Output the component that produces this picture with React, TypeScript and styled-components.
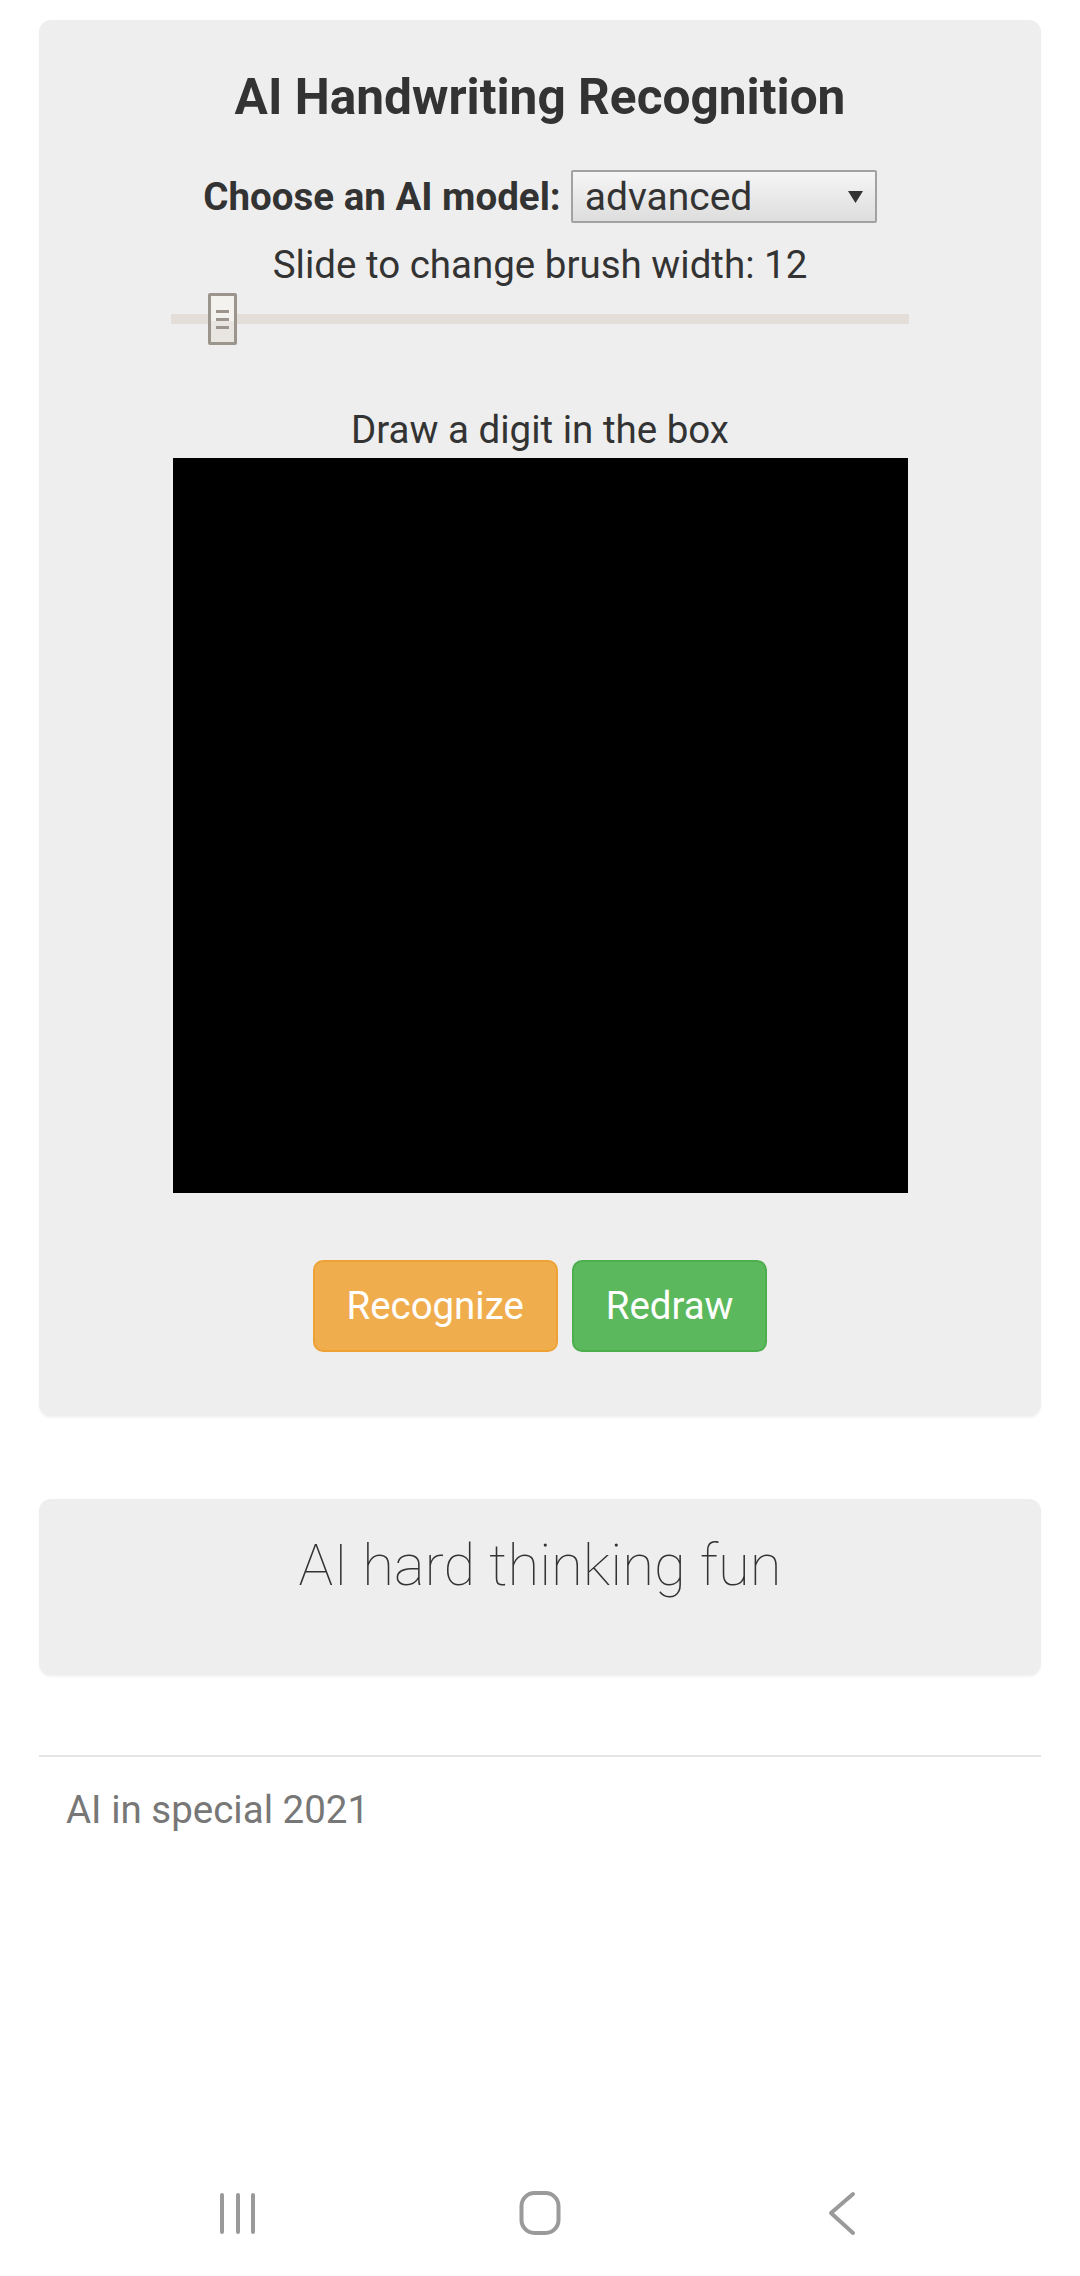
import React, { useState } from "react";
import styled, { createGlobalStyle } from "styled-components";

const GlobalStyle = createGlobalStyle`
  html, body {
    margin: 0;
    padding: 0;
    background: #fff;
    font-family: Roboto, "Liberation Sans", Arial, sans-serif;
    color: #333;
  }
  * {
    box-sizing: border-box;
  }
`;

const Page = styled.div`
  display: flex;
  flex-direction: column;
  min-height: 2276px;
`;

const Main = styled.main`
  padding: 20px 39px 0;
`;

const Panel = styled.section`
  display: flex;
  flex-direction: column;
  align-items: center;
  background: #eee;
  border-radius: 12px;
  box-shadow: 0 2px 2px rgba(0, 0, 0, 0.05);
  padding: ${(p: { pad: string }) => p.pad};
`;

const Title = styled.h1`
  margin: 0;
  padding-top: 1px;
  font-size: 49.6px;
  line-height: 59px;
  font-weight: 700;
  color: #333;
`;

const ModelRow = styled.div`
  margin-top: 43px;
  height: 53px;
  display: flex;
  align-items: center;
  gap: 10px;
`;

const Label = styled.label`
  font-size: 38.5px;
  line-height: 44px;
  font-weight: 700;
  color: #333;
`;

const SelectBox = styled.div`
  position: relative;
  width: 306px;
  height: 53px;
`;

const Select = styled.select`
  appearance: none;
  -webkit-appearance: none;
  width: 100%;
  height: 100%;
  margin: 0;
  padding: 0 40px 0 12px;
  border: 2px solid #a2a2a2;
  border-radius: 2px;
  background: linear-gradient(#f6f6f6, #dddddd);
  font-family: Roboto, "Liberation Sans", Arial, sans-serif;
  font-size: 39px;
  color: #333;
  outline: none;
`;

const Arrow = styled.svg`
  position: absolute;
  right: 14px;
  top: 21px;
  pointer-events: none;
`;

const Text = styled.div`
  margin-top: ${(p: { top: number }) => p.top}px;
  font-size: 38.5px;
  line-height: 44px;
  color: #333;
`;

const SliderWrap = styled.div`
  position: relative;
  margin-top: 6px;
  width: 738px;
  height: 52px;
  display: flex;
  align-items: center;
`;

const Track = styled.div`
  width: 100%;
  height: 10px;
  background: #e3ded8;
`;

const Thumb = styled.div`
  position: absolute;
  top: 0;
  width: 29px;
  height: 52px;
  border: 3px solid #9c958e;
  border-radius: 2px;
  background: linear-gradient(#f4f2ef 55%, #e9e5e0 55%);
  display: flex;
  flex-direction: column;
  align-items: center;
  justify-content: center;
  gap: 5px;
`;

const Grip = styled.span`
  width: 13px;
  height: 3px;
  background: #9c958e;
`;

const Board = styled.canvas`
  margin-top: 6px;
  width: 735px;
  height: 735px;
  background: #000;
  display: block;
`;

const ButtonRow = styled.div`
  margin-top: 67px;
  display: flex;
  gap: 14px;
`;

type Tone = { tone: "warn" | "ok" };

const Button = styled.button<Tone>`
  height: 92px;
  padding: 0 32px;
  border: 2px solid ${(p) => (p.tone === "warn" ? "#eea236" : "#4cae4c")};
  border-radius: 10px;
  background: ${(p) => (p.tone === "warn" ? "#f0ad4e" : "#5cb85c")};
  color: #fff;
  font-family: Roboto, "Liberation Sans", Arial, sans-serif;
  font-size: 38.4px;
  line-height: 52px;
  cursor: pointer;
`;

const Motto = styled.h2`
  margin: 0;
  font-size: 58px;
  line-height: 70px;
  font-weight: 100;
  color: #333;
`;

const Gap = styled.div`
  height: 83px;
`;

const Rule = styled.hr`
  margin: 80px 0 0;
  border: 0;
  height: 2px;
  background: #e5e5e5;
`;

const Footer = styled.footer`
  margin-top: 28px;
  padding-left: 27px;
  font-size: 38.5px;
  line-height: 50px;
  color: #777;
`;

const NavBar = styled.nav`
  margin-top: auto;
  height: 126px;
  display: grid;
  grid-template-columns: repeat(3, 302px);
  justify-content: center;
  align-items: center;
  justify-items: center;
`;

const NavIcon = styled.svg`
  display: block;
`;

const MIN = 1;
const MAX = 160;

export default function App() {
  const [model, setModel] = useState("advanced");
  const [brush] = useState(12);
  const pct = (brush - MIN) / (MAX - MIN);

  return (
    <Page>
      <GlobalStyle />
      <Main>
        <Panel pad="47px 0 64px">
          <Title>AI Handwriting Recognition</Title>
          <ModelRow>
            <Label htmlFor="model">Choose an AI model:</Label>
            <SelectBox>
              <Select id="model" value={model} onChange={(e) => setModel(e.target.value)}>
                <option value="basic">basic</option>
                <option value="advanced">advanced</option>
              </Select>
              <Arrow width="15" height="12" viewBox="0 0 15 12">
                <polygon points="0,0 15,0 7.5,12" fill="#333" />
              </Arrow>
            </SelectBox>
          </ModelRow>
          <Text top={20}>Slide to change brush width: {brush}</Text>
          <SliderWrap>
            <Track />
            <Thumb style={{ left: `calc(${pct * 100}% - 14.5px)` }}>
              <Grip />
              <Grip />
              <Grip />
            </Thumb>
          </SliderWrap>
          <Text top={63}>Draw a digit in the box</Text>
          <Board width={280} height={280} />
          <ButtonRow>
            <Button tone="warn">Recognize</Button>
            <Button tone="ok">Redraw</Button>
          </ButtonRow>
        </Panel>
        <Gap />
        <Panel pad="31px 0 75px">
          <Motto>AI hard thinking fun</Motto>
        </Panel>
        <Rule />
        <Footer>AI in special 2021</Footer>
      </Main>
      <NavBar>
        <NavIcon width="60" height="60" viewBox="0 0 60 60">
          <g stroke="#9a9a9a" strokeWidth="4" strokeLinecap="round">
            <line x1="14" y1="12" x2="14" y2="49" />
            <line x1="30" y1="12" x2="30" y2="49" />
            <line x1="45" y1="12" x2="45" y2="49" />
          </g>
        </NavIcon>
        <NavIcon width="60" height="60" viewBox="0 0 60 60">
          <rect x="11.5" y="10" width="37" height="40" rx="13" fill="none" stroke="#9a9a9a" strokeWidth="4" />
        </NavIcon>
        <NavIcon width="60" height="60" viewBox="0 0 60 60">
          <polyline
            points="41,11 19,30 41,50"
            fill="none"
            stroke="#9a9a9a"
            strokeWidth="4"
            strokeLinecap="round"
            strokeLinejoin="round"
          />
        </NavIcon>
      </NavBar>
    </Page>
  );
}
